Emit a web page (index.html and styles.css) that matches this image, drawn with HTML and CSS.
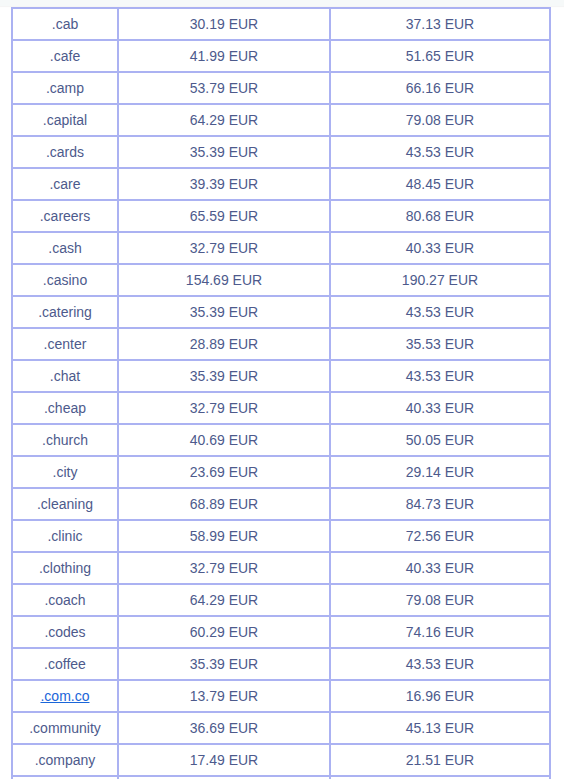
FILE: index.html
```html
<!DOCTYPE html>
<html lang="en">
<head>
<meta charset="utf-8">
<title>Domain prices</title>
<link rel="stylesheet" href="styles.css">
</head>
<body>
<div class="topbar"></div>
<main class="wrap">
<table class="prices">
<colgroup><col class="c1"><col class="c2"><col class="c3"></colgroup>
<tbody>
<tr><td>.cab</td><td>30.19 EUR</td><td>37.13 EUR</td></tr>
<tr><td>.cafe</td><td>41.99 EUR</td><td>51.65 EUR</td></tr>
<tr><td>.camp</td><td>53.79 EUR</td><td>66.16 EUR</td></tr>
<tr><td>.capital</td><td>64.29 EUR</td><td>79.08 EUR</td></tr>
<tr><td>.cards</td><td>35.39 EUR</td><td>43.53 EUR</td></tr>
<tr><td>.care</td><td>39.39 EUR</td><td>48.45 EUR</td></tr>
<tr><td>.careers</td><td>65.59 EUR</td><td>80.68 EUR</td></tr>
<tr><td>.cash</td><td>32.79 EUR</td><td>40.33 EUR</td></tr>
<tr><td>.casino</td><td>154.69 EUR</td><td>190.27 EUR</td></tr>
<tr><td>.catering</td><td>35.39 EUR</td><td>43.53 EUR</td></tr>
<tr><td>.center</td><td>28.89 EUR</td><td>35.53 EUR</td></tr>
<tr><td>.chat</td><td>35.39 EUR</td><td>43.53 EUR</td></tr>
<tr><td>.cheap</td><td>32.79 EUR</td><td>40.33 EUR</td></tr>
<tr><td>.church</td><td>40.69 EUR</td><td>50.05 EUR</td></tr>
<tr><td>.city</td><td>23.69 EUR</td><td>29.14 EUR</td></tr>
<tr><td>.cleaning</td><td>68.89 EUR</td><td>84.73 EUR</td></tr>
<tr><td>.clinic</td><td>58.99 EUR</td><td>72.56 EUR</td></tr>
<tr><td>.clothing</td><td>32.79 EUR</td><td>40.33 EUR</td></tr>
<tr><td>.coach</td><td>64.29 EUR</td><td>79.08 EUR</td></tr>
<tr><td>.codes</td><td>60.29 EUR</td><td>74.16 EUR</td></tr>
<tr><td>.coffee</td><td>35.39 EUR</td><td>43.53 EUR</td></tr>
<tr><td><a href="#" class="link">.com.co</a></td><td>13.79 EUR</td><td>16.96 EUR</td></tr>
<tr><td>.community</td><td>36.69 EUR</td><td>45.13 EUR</td></tr>
<tr><td>.company</td><td>17.49 EUR</td><td>21.51 EUR</td></tr>
<tr><td></td><td></td><td></td></tr>
</tbody>
</table>
</main>
</body>
</html>
```

FILE: styles.css
```css
html, body {
  margin: 0;
  padding: 0;
  background: #ffffff;
  overflow: hidden;
}
body {
  font-family: "Liberation Sans", Arial, sans-serif;
  font-size: 14px;
  color: #4d5a8c;
}
.topbar {
  position: absolute;
  top: 0;
  left: 0;
  right: 0;
  height: 6px;
  background: #f6f9f9;
  box-shadow: 0 1px 1px rgba(0, 0, 0, 0.04);
  z-index: 2;
}
.wrap {
  padding: 7px 0 0 11px;
}
.prices {
  table-layout: fixed;
  width: 540px;
  border-collapse: separate;
  border-spacing: 0;
  border-left: 2px solid #abb2f2;
  border-top: 2px solid #abb2f2;
}
.c1 { width: 106px; }
.c2 { width: 212px; }
.c3 { width: 220px; }
.prices td {
  height: 30px;
  padding: 0;
  text-align: center;
  vertical-align: middle;
  border-right: 2px solid #abb2f2;
  border-bottom: 2px solid #abb2f2;
  line-height: 16px;
}
.link {
  color: #1a66d9;
  text-decoration: underline;
}
```
